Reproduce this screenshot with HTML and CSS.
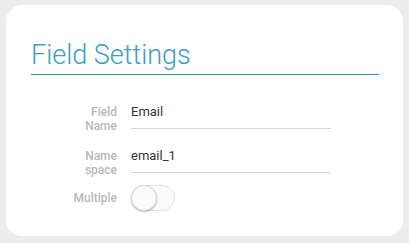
FILE: index.html
```html
<!DOCTYPE html>
<html lang="en">

<head>
    <meta charset="UTF-8">
    <meta name="viewport" content="width=device-width, initial-scale=1.0">
    <title>Field Settings</title>
    <link rel="stylesheet" href="styles.css">
</head>

<body>

    <div class="card">
        <h2 class="card-title">Field Settings</h2>

        <div class="field-row">
            <label class="field-label" for="fieldName">Field Name</label>
            <div class="field-value" id="fieldName">Email</div>
        </div>

        <div class="field-row">
            <label class="field-label" for="nameSpace">Name space</label>
            <div class="field-value" id="nameSpace">email_1</div>
        </div>

        <div class="field-row toggle-row">
            <span class="field-label">Multiple</span>
            <span class="toggle"><span class="toggle-knob"></span></span>
        </div>
    </div>

</body>

</html>
```

FILE: styles.css
```css
body {
    font-family: Roboto, "Liberation Sans", Arial, sans-serif;
    background-color: #ececec;
    margin: 0;
    padding: 5px 6px;
}

.card {
    background-color: #fff;
    width: 397px;
    height: 231px;
    box-sizing: border-box;
    border-radius: 16px;
    padding: 34px 24px 0 25px;
}

.card-title {
    margin: 0 0 28px;
    font-size: 27px;
    font-weight: 300;
    line-height: normal;
    color: #3e9dc4;
    padding-bottom: 3px;
    border-bottom: 1.5px solid #2d8fab;
}

.field-row {
    display: grid;
    grid-template-columns: 86px 200px;
    column-gap: 14px;
    align-items: start;
    margin-bottom: 14px;
}

.field-label {
    justify-self: end;
    width: 40px;
    text-align: right;
    font-size: 12px;
    font-weight: 500;
    line-height: 14px;
    color: #b9b9b9;
    margin-top: 2px;
}

.field-value {
    font-size: 13px;
    line-height: 18px;
    color: #333;
    padding-bottom: 7px;
    border-bottom: 1px solid #d6d6d6;
}

.toggle-row {
    align-items: center;
    margin-top: -6px;
}

.toggle-row .field-label {
    width: auto;
    margin-top: 0;
}

.toggle {
    display: block;
    width: 44px;
    height: 26px;
    box-sizing: border-box;
    border: 1px solid #e2e2e2;
    border-radius: 13px;
    background-color: #fbfbfc;
    position: relative;
}

.toggle-knob {
    position: absolute;
    left: -1px;
    top: -1px;
    width: 26px;
    height: 26px;
    box-sizing: border-box;
    border-radius: 50%;
    background-color: #fafbfc;
    border: 1px solid #d8d8d8;
    box-shadow: 0 1px 2px rgba(0, 0, 0, 0.25);
}
```
